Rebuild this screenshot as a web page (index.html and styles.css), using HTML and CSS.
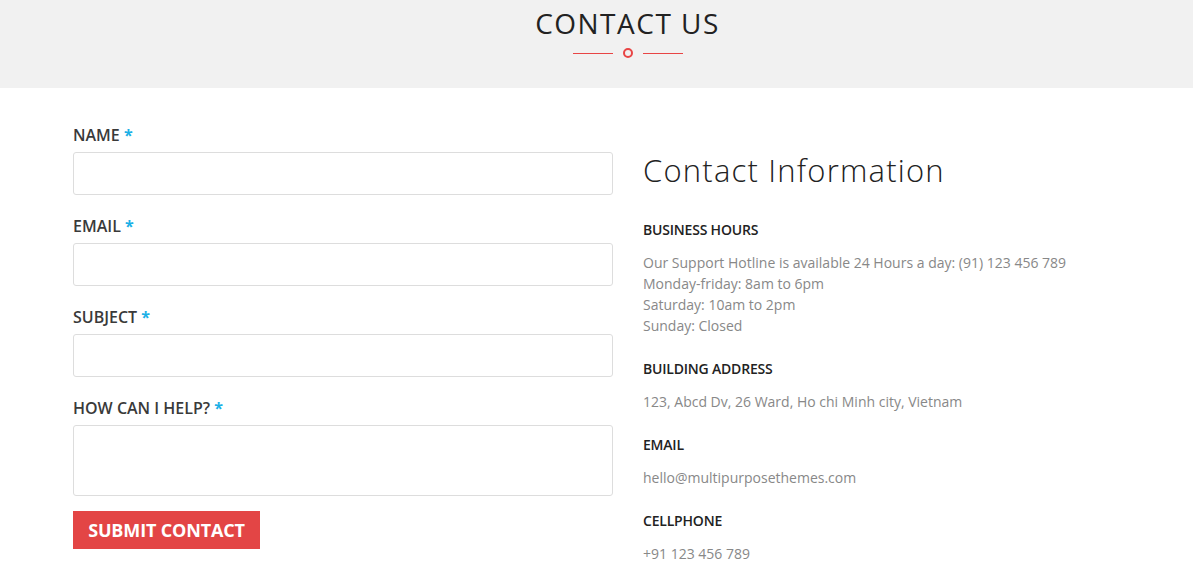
FILE: index.html
```html
<!DOCTYPE html>
<html lang="en">
<head>
  <meta charset="UTF-8">
  <title>Contact Us</title>
  <link rel="stylesheet" href="styles.css">
</head>
<body>
  <header class="page-title">
    <h1>Contact Us</h1>
    <div class="divider">
      <span class="line"></span>
      <span class="dot"></span>
      <span class="line"></span>
    </div>
  </header>

  <main class="contact">
    <form class="contact-form" onsubmit="return false">
      <label class="field">
        <span class="label">Name <em>*</em></span>
        <input type="text">
      </label>
      <label class="field">
        <span class="label">Email <em>*</em></span>
        <input type="email">
      </label>
      <label class="field">
        <span class="label">Subject <em>*</em></span>
        <input type="text">
      </label>
      <label class="field">
        <span class="label">How can I help? <em>*</em></span>
        <textarea></textarea>
      </label>
      <button type="submit" class="btn-submit">Submit Contact</button>
    </form>

    <section class="contact-info">
      <h2>Contact Information</h2>
      <div class="info-block">
        <h3>Business Hours</h3>
        <p>Our Support Hotline is available 24 Hours a day: (91) 123 456 789<br>
        Monday-friday: 8am to 6pm<br>
        Saturday: 10am to 2pm<br>
        Sunday: Closed</p>
      </div>
      <div class="info-block">
        <h3>Building Address</h3>
        <p>123, Abcd Dv, 26 Ward, Ho chi Minh city, Vietnam</p>
      </div>
      <div class="info-block">
        <h3>Email</h3>
        <p>hello@multipurposethemes.com</p>
      </div>
      <div class="info-block">
        <h3>Cellphone</h3>
        <p>+91 123 456 789</p>
      </div>
    </section>
  </main>
</body>
</html>
```

FILE: styles.css
```css
body {
  font-family: 'Open Sans', 'Liberation Sans', sans-serif;
  margin: 0;
  background: #fff;
  color: #333;
}
.page-title {
  background: #f1f1f1;
  height: 88px;
  box-sizing: border-box;
  padding: 4px 0 0 62px;
  text-align: center;
}
.page-title h1 {
  margin: 0;
  font-size: 28px;
  font-weight: 500;
  line-height: 38px;
  letter-spacing: 1.5px;
  text-transform: uppercase;
  color: #222;
}
.divider {
  display: flex;
  justify-content: center;
  align-items: center;
  gap: 10px;
  margin-top: 6px;
}
.divider .line {
  width: 40px;
  height: 1px;
  background: #e84545;
}
.divider .dot {
  width: 6px;
  height: 6px;
  border: 2px solid #e84545;
  border-radius: 50%;
}
.contact {
  display: grid;
  grid-template-columns: 540px 1fr;
  column-gap: 30px;
  padding: 36px 0 0 73px;
}
.field {
  display: block;
  margin-bottom: 20px;
}
.label {
  display: block;
  font-size: 16px;
  font-weight: 600;
  line-height: 22px;
  margin-bottom: 6px;
  text-transform: uppercase;
  color: #3a3a3a;
}
.label em {
  font-style: normal;
  font-weight: 700;
  color: #1bb0e6;
}
.field input,
.field textarea {
  display: block;
  width: 100%;
  box-sizing: border-box;
  height: 43px;
  border: 1px solid #ddd;
  border-radius: 3px;
  background: #fff;
  font-family: inherit;
  resize: none;
}
.field textarea {
  height: 71px;
}
.btn-submit {
  margin-top: -5px;
  width: 187px;
  height: 38px;
  border: none;
  background: #e34545;
  color: #fff;
  font-family: inherit;
  font-size: 18px;
  font-weight: 700;
  letter-spacing: -0.15px;
  text-transform: uppercase;
  cursor: pointer;
}
.contact-info h2 {
  margin: 26px 0 29px;
  font-size: 31px;
  font-weight: 300;
  line-height: 40px;
  letter-spacing: 1.2px;
  color: #222;
}
.info-block {
  margin-bottom: 22px;
}
.info-block h3 {
  margin: 0 0 12px;
  font-size: 14px;
  font-weight: 600;
  line-height: 21px;
  letter-spacing: -0.2px;
  text-transform: uppercase;
  color: #222;
}
.info-block p {
  margin: 0;
  font-size: 14px;
  line-height: 21px;
  color: #888;
}
```
